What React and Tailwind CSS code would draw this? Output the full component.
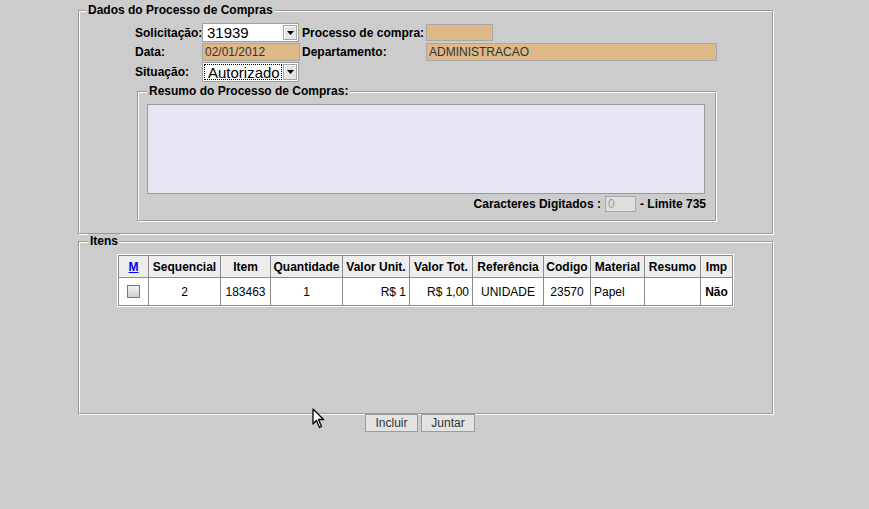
import React from 'react';

function Select({ value, focused = false }) {
    return (
        <div className={`flex ${focused ? 'h-[20px]' : 'h-[19px]'} w-[97px] items-stretch border border-[#9f9f9f] bg-white p-[1px] font-normal`}>
            <div className={`flex flex-1 items-center pl-[3px] ${focused ? 'border border-dotted border-black' : ''}`}>
                <span className="text-[15px] leading-none text-black">{value}</span>
            </div>
            <div className="ml-[1px] flex w-[14px] items-center justify-center border border-[#a5a5a5] bg-[#e4e4e4] shadow-[inset_1px_1px_0_#fff]">
                <svg width="7" height="4" viewBox="0 0 7 4">
                    <path d="M0 0 L7 0 L3.5 4 Z" fill="#000" />
                </svg>
            </div>
        </div>
    );
}

function TanInput({ value, className }) {
    return (
        <div className={`flex items-center border border-[#a8a8a8] bg-[#deb887] pl-[2px] text-[12px] font-normal text-[#333] ${className}`}>
            {value}
        </div>
    );
}

const fieldsetCls = "border border-[#9a9a9a] shadow-[inset_1px_1px_0_#fff,1px_1px_0_#fff]";
const cell = "border border-[#8c8c8c]";

export default function App() {
    const cols = [30, 72, 50, 72, 67, 63, 71, 47, 54, 56, 32];

    return (
        <div className="relative min-h-screen bg-[#cccccc] pt-[3px] font-['Liberation_Sans',Arial,sans-serif] text-[12px] text-black">
            {/* Dados do processo */}
            <fieldset className={`ml-[78px] w-[695px] px-[7px] pb-[12px] ${fieldsetCls}`}>
                <legend className="bg-[#cccccc] px-[2px] text-[12px] leading-[14px] font-bold">Dados do Processo de Compras</legend>

                <div className="mt-[6px] ml-[49px] grid grid-cols-[67px_100px_124px_291px] items-center font-bold">
                    <div className="flex h-[19px] items-center">Solicitação:</div>
                    <div className="flex h-[19px] items-center"><Select value="31939" /></div>
                    <div className="flex h-[19px] items-center">Processo de compra:</div>
                    <div className="flex h-[19px] items-center"><TanInput value="" className="h-[17px] w-[67px]" /></div>

                    <div className="flex h-[20px] items-center">Data:</div>
                    <div className="flex h-[20px] items-center"><TanInput value="02/01/2012" className="h-[18px] w-[98px]" /></div>
                    <div className="flex h-[20px] items-center">Departamento:</div>
                    <div className="flex h-[20px] items-center"><TanInput value="ADMINISTRACAO" className="h-[18px] w-[291px]" /></div>

                    <div className="flex h-[20px] items-center">Situação:</div>
                    <div className="flex h-[20px] items-center"><Select value="Autorizado" focused /></div>
                    <div />
                    <div />
                </div>

                {/* Resumo */}
                <fieldset className={`mt-[2px] ml-[51px] w-[578px] px-[9px] pb-[7px] ${fieldsetCls}`}>
                    <legend className="bg-[#cccccc] px-[2px] text-[12px] leading-[14px] font-bold">Resumo do Processo de Compras:</legend>
                    <div className="mt-[6px] h-[90px] w-[558px] border border-[#9a9a9a] bg-[#e6e5f1]" />
                    <div className="mt-[1px] flex h-[18px] w-[559px] items-center justify-end gap-[4px] font-bold">
                        <span>Caracteres Digitados :</span>
                        <div className="flex h-[16px] w-[31px] items-center border border-[#a8a8a8] bg-[#dedede] pl-[2px] font-normal text-[#9a9a9a]">0</div>
                        <span>- Limite 735</span>
                    </div>
                </fieldset>
            </fieldset>

            {/* Itens */}
            <fieldset className={`ml-[78px] w-[695px] px-[9px] pb-[107px] ${fieldsetCls}`}>
                <legend className="bg-[#cccccc] px-[2px] text-[12px] leading-[14px] font-bold">Itens</legend>
                <table className="mx-auto mt-[7px] w-[615px] table-fixed border-collapse border border-[#8c8c8c] shadow-[0_0_0_1px_#fff] text-[12px]">
                    <colgroup>
                        {cols.map((w, i) => (
                            <col key={i} style={{ width: w }} />
                        ))}
                    </colgroup>
                    <thead>
                        <tr className="bg-[#ededed] font-bold">
                            <th className={`${cell} h-[22px] text-center`}>
                                <span className="text-[#0000ee] underline">M</span>
                            </th>
                            <th className={`${cell} text-center`}>Sequencial</th>
                            <th className={`${cell} text-center`}>Item</th>
                            <th className={`${cell} text-center`}>Quantidade</th>
                            <th className={`${cell} text-center`}>Valor Unit.</th>
                            <th className={`${cell} text-center`}>Valor Tot.</th>
                            <th className={`${cell} text-center`}>Referência</th>
                            <th className={`${cell} text-center`}>Codigo</th>
                            <th className={`${cell} text-center`}>Material</th>
                            <th className={`${cell} text-center`}>Resumo</th>
                            <th className={`${cell} text-center`}>Imp</th>
                        </tr>
                    </thead>
                    <tbody>
                        <tr className="bg-white">
                            <td className={`${cell} h-[28px] text-center`}>
                                <span className="inline-block h-[13px] w-[13px] translate-y-[2px] border border-[#777] bg-gradient-to-b from-[#f2f2f2] to-[#cfcfcf]" />
                            </td>
                            <td className={`${cell} text-center`}>2</td>
                            <td className={`${cell} text-center`}>183463</td>
                            <td className={`${cell} text-center`}>1</td>
                            <td className={`${cell} pr-[3px] text-right`}>R$ 1</td>
                            <td className={`${cell} pr-[3px] text-right`}>R$ 1,00</td>
                            <td className={`${cell} text-center`}>UNIDADE</td>
                            <td className={`${cell} text-center`}>23570</td>
                            <td className={`${cell} pl-[3px] text-left`}>Papel</td>
                            <td className={cell}></td>
                            <td className={`${cell} text-center font-bold`}>Não</td>
                        </tr>
                    </tbody>
                </table>
            </fieldset>

            {/* Botões */}
            <div className="ml-[365px] flex gap-[3px]">
                <button className="h-[18px] w-[53px] border border-[#9a9a9a] bg-[#e3e3e3] text-[12px] leading-none text-[#333]">Incluir</button>
                <button className="h-[18px] w-[54px] border border-[#9a9a9a] bg-[#e3e3e3] text-[12px] leading-none text-[#333]">Juntar</button>
            </div>

            {/* Cursor */}
            <svg className="absolute left-[312px] top-[408px]" width="14" height="21" viewBox="0 0 14 21">
                <path d="M1 1 L1 16 L4.5 12.5 L7.5 19.5 L9.5 18.5 L6.5 11.5 L11.5 11.5 Z" fill="#fff" stroke="#000" strokeWidth="1.3" strokeLinejoin="round" />
            </svg>
        </div>
    );
}
